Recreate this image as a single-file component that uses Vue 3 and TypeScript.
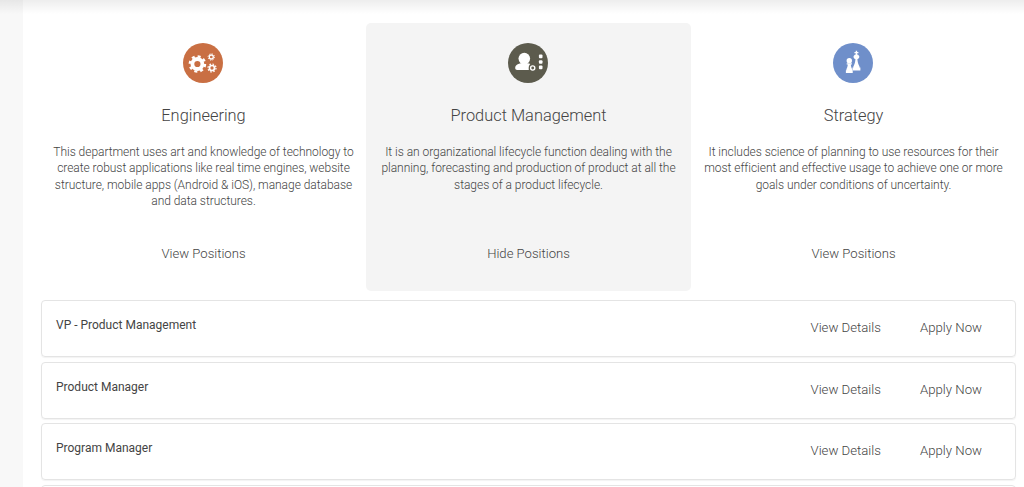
<script setup lang="ts">
interface Dept { name: string; text: string; link: string; color: string; kind: string; active?: boolean }
const depts: Dept[] = [
  { name: 'Engineering', text: 'This department uses art and knowledge of technology to create robust applications like real time engines, website structure, mobile apps (Android & iOS), manage database and data structures.', link: 'View Positions', color: '#c96f43', kind: 'gears' },
  { name: 'Product Management', text: 'It is an organizational lifecycle function dealing with the planning, forecasting and production of product at all the stages of a product lifecycle.', link: 'Hide Positions', color: '#5c5b4d', kind: 'person', active: true },
  { name: 'Strategy', text: 'It includes science of planning to use resources for their most efficient and effective usage to achieve one or more goals under conditions of uncertainty.', link: 'View Positions', color: '#6f8fca', kind: 'chess' },
]
const jobs: string[] = ['VP - Product Management', 'Product Manager', 'Program Manager', '']
</script>

<template>
  <div class="page">
    <div class="topshade"></div>
    <aside class="gutter"></aside>
    <main class="main">
      <section class="depts">
        <article v-for="d in depts" :key="d.name" class="dept" :class="{ active: d.active }">
          <svg class="icon" width="40" height="40" viewBox="0 0 40 40">
            <circle cx="20" cy="20" r="20" :fill="d.color" />
            <g v-if="d.kind === 'gears'" fill="none" stroke="#fff">
              <circle cx="14.4" cy="21" r="5" stroke-width="3.8" />
              <circle cx="14.4" cy="21" r="7.6" stroke-width="2.4" stroke-dasharray="3 2.97" />
              <circle cx="28.3" cy="14" r="2" stroke-width="1.3" />
              <circle cx="28.3" cy="14" r="3.2" stroke-width="1" stroke-dasharray="1.2 1.31" />
              <circle cx="29" cy="25" r="2.5" stroke-width="1.7" />
              <circle cx="29" cy="25" r="4" stroke-width="1.2" stroke-dasharray="1.6 1.54" />
            </g>
            <g v-else-if="d.kind === 'person'" fill="#fff">
              <circle cx="16.3" cy="15.6" r="5.8" />
              <path d="M7.2 25c0-3.300 3.700-5 9.100-5 2.500 0 4.500.3 6 1.100-1.300 1.200-1.900 3-1.500 5.900H9.200c-1.300 0-2-.7-2-2z" />
              <circle cx="24.700" cy="25" r="2.100" fill="none" stroke="#fff" stroke-width="1.400" />
              <rect x="30.900" y="11.600" width="3.600" height="3.600" rx="1" />
              <rect x="30.900" y="17.200" width="3.600" height="3.600" rx="1" />
              <rect x="30.900" y="22.600" width="3.600" height="3.600" rx="1" />
            </g>
            <g v-else fill="#fff">
              <path transform="translate(1.830 1.400) scale(.9)" d="M23.200 7h1.600v1.400h1.400v1.500h-1.400v1.300c1.500.4 2.400 1.400 2.400 2.600 0 1-.6 1.900-1.500 2.500h-.6c.1 3 .9 5.800 2.300 8.200v1.200h1v3.300H19.600v-3.300h1v-1.200c1.400-2.400 2.200-5.200 2.300-8.200h-.6c-.9-.6-1.500-1.500-1.500-2.500 0-1.200.9-2.200 2.400-2.600V9.900h-1.400V8.400h1.400z" />
              <g transform="translate(2.350 1.890) scale(.9)">
                <circle cx="15.500" cy="17.500" r="3" />
                <path d="M12.600 20.500h5.800v1.200h-1.200c.1 2 .7 3.800 1.500 5.200v1.200h.6v3.100H11.700v-3.100h.6v-1.200c.8-1.400 1.400-3.200 1.500-5.200h-1.200z" />
              </g>
            </g>
          </svg>
          <h2 class="name">{{ d.name }}</h2>
          <p class="text">{{ d.text }}</p>
          <a class="link">{{ d.link }}</a>
        </article>
      </section>
      <section class="jobs">
        <div v-for="(j, i) in jobs" :key="i" class="job">
          <span class="title">{{ j }}</span>
          <div v-if="j" class="actions">
            <a class="action">View Details</a>
            <a class="action">Apply Now</a>
          </div>
        </div>
      </section>
    </main>
  </div>
</template>

<style>
html, body { margin: 0; height: 100%; overflow: hidden; background: #fff; }
</style>

<style scoped>
.page {
  display: flex;
  height: 487px;
  overflow: hidden;
  position: relative;
  font-family: Roboto, "Liberation Sans", sans-serif;
  background: #fff;
}
.topshade {
  position: absolute;
  inset: 0 0 auto 0;
  height: 14px;
  background: linear-gradient(rgba(0, 0, 0, 0.07), rgba(0, 0, 0, 0));
}
.gutter { width: 23px; flex: none; background: #f8f8f8; }
.main { flex: 1; padding: 23px 8px 0 18px; min-width: 0; }
.depts { display: flex; }
.dept {
  width: 325px;
  height: 268px;
  box-sizing: border-box;
  padding: 20px 10px 0;
  display: flex;
  flex-direction: column;
  align-items: center;
  text-align: center;
  border-radius: 5px;
}
.dept.active { background: #f4f4f4; }
.icon { display: block; flex: none; margin-left: -1px; }
.name {
  margin: 23px 0 0;
  font-size: 16.4px;
  line-height: 20px;
  font-weight: 300;
  color: #444;
}
.text {
  margin: 17.5px 0 0;
  height: 83px;
  font-size: 12px;
  letter-spacing: -0.04px;
  line-height: 16.6px;
  font-weight: 300;
  color: #444;
}
.link {
  margin-top: 17.5px;
  font-size: 13.1px;
  line-height: 20px;
  font-weight: 300;
  color: #444;
}
.jobs { margin-top: 9px; display: flex; flex-direction: column; gap: 4.6px; }
.job {
  height: 57px;
  flex: none;
  box-sizing: border-box;
  display: flex;
  justify-content: space-between;
  border: 1px solid #e4e4e4;
  border-radius: 4px;
  box-shadow: 0 1px 1px rgba(0, 0, 0, 0.05);
  padding: 16px 33px 0 14px;
}
.title { font-size: 12px; line-height: 16px; font-weight: 400; color: #444; }
.actions { display: flex; gap: 39px; margin-top: 1px; }
.action { font-size: 13.2px; line-height: 20px; font-weight: 300; color: #444; }
</style>
